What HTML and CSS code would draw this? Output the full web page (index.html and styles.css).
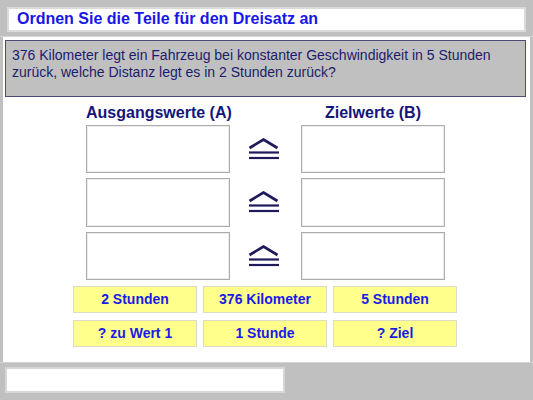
FILE: index.html
```html
<!DOCTYPE html>
<html lang="de">
<head>
<meta charset="utf-8">
<title>Dreisatz</title>
<link rel="stylesheet" href="styles.css">
</head>
<body>
<div class="app">
  <header class="header">
    <div class="title">Ordnen Sie die Teile für den Dreisatz an</div>
  </header>
  <main class="main">
    <div class="problem">376 Kilometer legt ein Fahrzeug bei konstanter Geschwindigkeit in 5 Stunden zurück, welche Distanz legt es in 2 Stunden zurück?</div>
    <div class="board">
      <div class="colhead">Ausgangswerte (A)</div>
      <div></div>
      <div class="colhead">Zielwerte (B)</div>

      <div class="slot"></div>
      <div class="sym"><svg width="32" height="22" viewBox="0 0 32 22"><polyline points="1.5,10 15.5,1.5 29.5,10" fill="none" stroke="#1e1a5c" stroke-width="2.7"/><line x1="1" y1="14.5" x2="31" y2="14.5" stroke="#1e1a5c" stroke-width="2.2"/><line x1="1" y1="20" x2="31" y2="20" stroke="#1e1a5c" stroke-width="2.2"/></svg></div>
      <div class="slot"></div>

      <div class="slot"></div>
      <div class="sym"><svg width="32" height="22" viewBox="0 0 32 22"><polyline points="1.5,10 15.5,1.5 29.5,10" fill="none" stroke="#1e1a5c" stroke-width="2.7"/><line x1="1" y1="14.5" x2="31" y2="14.5" stroke="#1e1a5c" stroke-width="2.2"/><line x1="1" y1="20" x2="31" y2="20" stroke="#1e1a5c" stroke-width="2.2"/></svg></div>
      <div class="slot"></div>

      <div class="slot"></div>
      <div class="sym"><svg width="32" height="22" viewBox="0 0 32 22"><polyline points="1.5,10 15.5,1.5 29.5,10" fill="none" stroke="#1e1a5c" stroke-width="2.7"/><line x1="1" y1="14.5" x2="31" y2="14.5" stroke="#1e1a5c" stroke-width="2.2"/><line x1="1" y1="20" x2="31" y2="20" stroke="#1e1a5c" stroke-width="2.2"/></svg></div>
      <div class="slot"></div>
    </div>
    <div class="chips">
      <div class="chip">2 Stunden</div>
      <div class="chip">376 Kilometer</div>
      <div class="chip">5 Stunden</div>
      <div class="chip">? zu Wert 1</div>
      <div class="chip">1 Stunde</div>
      <div class="chip">? Ziel</div>
    </div>
  </main>
  <footer class="footer">
    <div class="input"></div>
  </footer>
</div>
</body>
</html>
```

FILE: styles.css
```css
* { box-sizing: border-box; }
html, body { margin: 0; padding: 0; }
body {
  background: #c0c0c0;
  font-family: "Liberation Sans", Arial, sans-serif;
  width: 533px;
  height: 400px;
  overflow: hidden;
}
.app {
  display: flex;
  flex-direction: column;
  height: 400px;
}
.header {
  height: 37px;
  padding: 7px 7px 0 7px;
  border-bottom: 1px solid #d6d6d6;
}
.title {
  height: 25px;
  background: #fff;
  border: 2px solid #dadada;
  color: #1717e6;
  font-weight: bold;
  font-size: 16px;
  line-height: 20px;
  padding-left: 8px;
}
.main {
  height: 325px;
  margin: 0 3px;
  background: #fff;
  padding: 3px 0 0 2px;
}
.problem {
  width: 521px;
  height: 57px;
  background: #c0c0c0;
  border: 1px solid #4c4a78;
  color: #1c1c6c;
  font-size: 14px;
  line-height: 17px;
  padding: 6px 6px 0 6px;
}
.board {
  display: grid;
  grid-template-columns: 144px 71px 144px;
  grid-template-rows: 20px 48px 49px 48px;
  row-gap: 5px;
  margin: 3px 0 0 81px;
}
.colhead {
  text-align: center;
  color: #15157a;
  font-weight: bold;
  font-size: 16px;
  line-height: 26px;
  height: 20px;
  white-space: nowrap;
}
.slot {
  border: 1px solid #acacac;
  box-shadow: inset 0 0 0 1px #ececec;
  background: #fff;
}
.sym {
  display: flex;
  align-items: center;
  justify-content: center;
  padding-right: 4px;
  padding-bottom: 1px;
}
.sym svg { display: block; }
.chips {
  display: grid;
  grid-template-columns: repeat(3, 124px);
  grid-auto-rows: 27px;
  column-gap: 6px;
  row-gap: 7px;
  margin: 6px 0 0 68px;
}
.chip {
  background: #ffff8c;
  border: 1px solid #dcdcc4;
  color: #1a1ae8;
  font-weight: bold;
  font-size: 14px;
  display: flex;
  align-items: center;
  justify-content: center;
  padding-bottom: 2px;
}
.footer {
  height: 38px;
  border-top: 1px solid #d4d4d4;
  padding: 4px 0 0 5px;
}
.input {
  width: 280px;
  height: 26px;
  background: #fff;
  border: 2px solid #d6d6d6;
}
```
